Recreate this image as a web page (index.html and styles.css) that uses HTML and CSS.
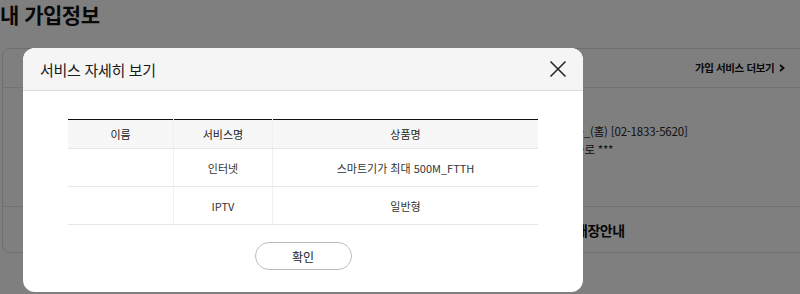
FILE: index.html
```html
<!DOCTYPE html>
<html lang="ko">
<head>
<meta charset="utf-8">
<link rel="stylesheet" href="styles.css">
</head>
<body>
<div class="page">
  <h1 class="title">내 가입정보</h1>
  <div class="card">
    <div class="card-head">
      <span class="more">가입 서비스 더보기</span>
      <svg class="chev" width="6" height="8" viewBox="0 0 6 8"><path d="M1 1L4.5 4L1 7" stroke="#111" stroke-width="1.8" fill="none"/></svg>
    </div>
    <div class="card-body">
      <p class="info">서울_(홈) [02-1833-5620]</p>
      <p class="info addr">종로 ***</p>
    </div>
    <div class="card-foot">
      <span class="store">매장안내</span>
    </div>
  </div>
</div>
<div class="overlay"></div>
<div class="modal">
  <div class="modal-head">
    <span class="modal-title">서비스 자세히 보기</span>
    <svg class="close" width="18" height="18" viewBox="0 0 18 18"><path d="M1.5 1.5L16.5 16.5M16.5 1.5L1.5 16.5" stroke="#222" stroke-width="1.5" fill="none"/></svg>
  </div>
  <div class="modal-body">
    <table class="tbl">
      <thead>
        <tr><th class="c1">이름</th><th class="c2">서비스명</th><th class="c3">상품명</th></tr>
      </thead>
      <tbody>
        <tr><td></td><td>인터넷</td><td>스마트기가 최대 500M_FTTH</td></tr>
        <tr><td></td><td>IPTV</td><td>일반형</td></tr>
      </tbody>
    </table>
    <button class="ok">확인</button>
  </div>
</div>
</body>
</html>
```
FILE: styles.css
```css
html, body {
  margin: 0;
  padding: 0;
  background: #fff;
  font-family: "Noto Sans CJK KR", "Noto Sans", sans-serif;
  overflow: hidden;
  width: 800px;
  height: 294px;
}
.title {
  margin: 0;
  padding: 0;
  font-size: 21px;
  line-height: 28px;
  font-weight: 700;
  color: #111;
  letter-spacing: -0.5px;
}
.card {
  margin: 20px 0 0 2px;
  width: 808px;
  height: 205px;
  border: 1px solid #ddd;
  border-radius: 8px;
  box-sizing: border-box;
  display: flex;
  flex-direction: column;
}
.card-head {
  height: 38px;
  border-bottom: 1px solid #e5e5e5;
  display: flex;
  align-items: center;
  gap: 5px;
  padding-left: 692px;
}
.more {
  font-size: 10.5px;
  font-weight: 700;
  color: #111;
  letter-spacing: -0.4px;
}
.chev {
  display: block;
}
.card-body {
  height: 120px;
  border-bottom: 1px solid #e5e5e5;
  padding: 34px 0 0 560px;
  box-sizing: border-box;
}
.info {
  margin: 0;
  font-size: 11.5px;
  line-height: 18px;
  color: #222;
  letter-spacing: -0.2px;
}
.addr {
  padding-left: 11px;
}
.card-foot {
  padding-left: 572px;
  display: flex;
  align-items: center;
  height: 45px;
}
.store {
  font-size: 14px;
  font-weight: 700;
  color: #111;
  letter-spacing: -0.5px;
}
.overlay {
  position: absolute;
  left: 0;
  top: 0;
  width: 800px;
  height: 294px;
  background: rgba(0, 0, 0, 0.5);
}
.modal {
  position: absolute;
  left: 23px;
  top: 48px;
  width: 560px;
  height: 244px;
  background: #fff;
  border-radius: 12px;
  overflow: hidden;
}
.modal-head {
  height: 42px;
  background: #f5f5f5;
  border-bottom: 1px solid #dcdcdc;
  display: flex;
  align-items: center;
  justify-content: space-between;
  padding: 0 16px 0 17px;
}
.modal-title {
  font-size: 15px;
  color: #1a1a1a;
  letter-spacing: -0.3px;
}
.close {
  display: block;
}
.modal-body {
  padding: 28px 45px 0 45px;
  display: flex;
  flex-direction: column;
  align-items: center;
}
.tbl {
  width: 470px;
  border-collapse: collapse;
  border-top: 1px solid #111;
  font-size: 11px;
  color: #333;
}
.tbl th {
  height: 28px;
  background: #f7f7f7;
  font-weight: 400;
  color: #222;
  padding: 0;
  border-bottom: 1px solid #e6e6e6;
}
.tbl td {
  height: 37px;
  padding: 0;
  text-align: center;
  border-bottom: 1px solid #e6e6e6;
}
.tbl th + th, .tbl td + td {
  border-left: 1px solid #f0f0f0;
}
.c1 { width: 105px; }
.c2 { width: 98px; }
.ok {
  margin-top: 17px;
  width: 97px;
  height: 28px;
  border: 1px solid #bdbdbd;
  border-radius: 14px;
  background: #fff;
  font-family: "Noto Sans CJK KR", "Noto Sans", sans-serif;
  font-size: 12px;
  color: #222;
  padding: 0;
}
```
